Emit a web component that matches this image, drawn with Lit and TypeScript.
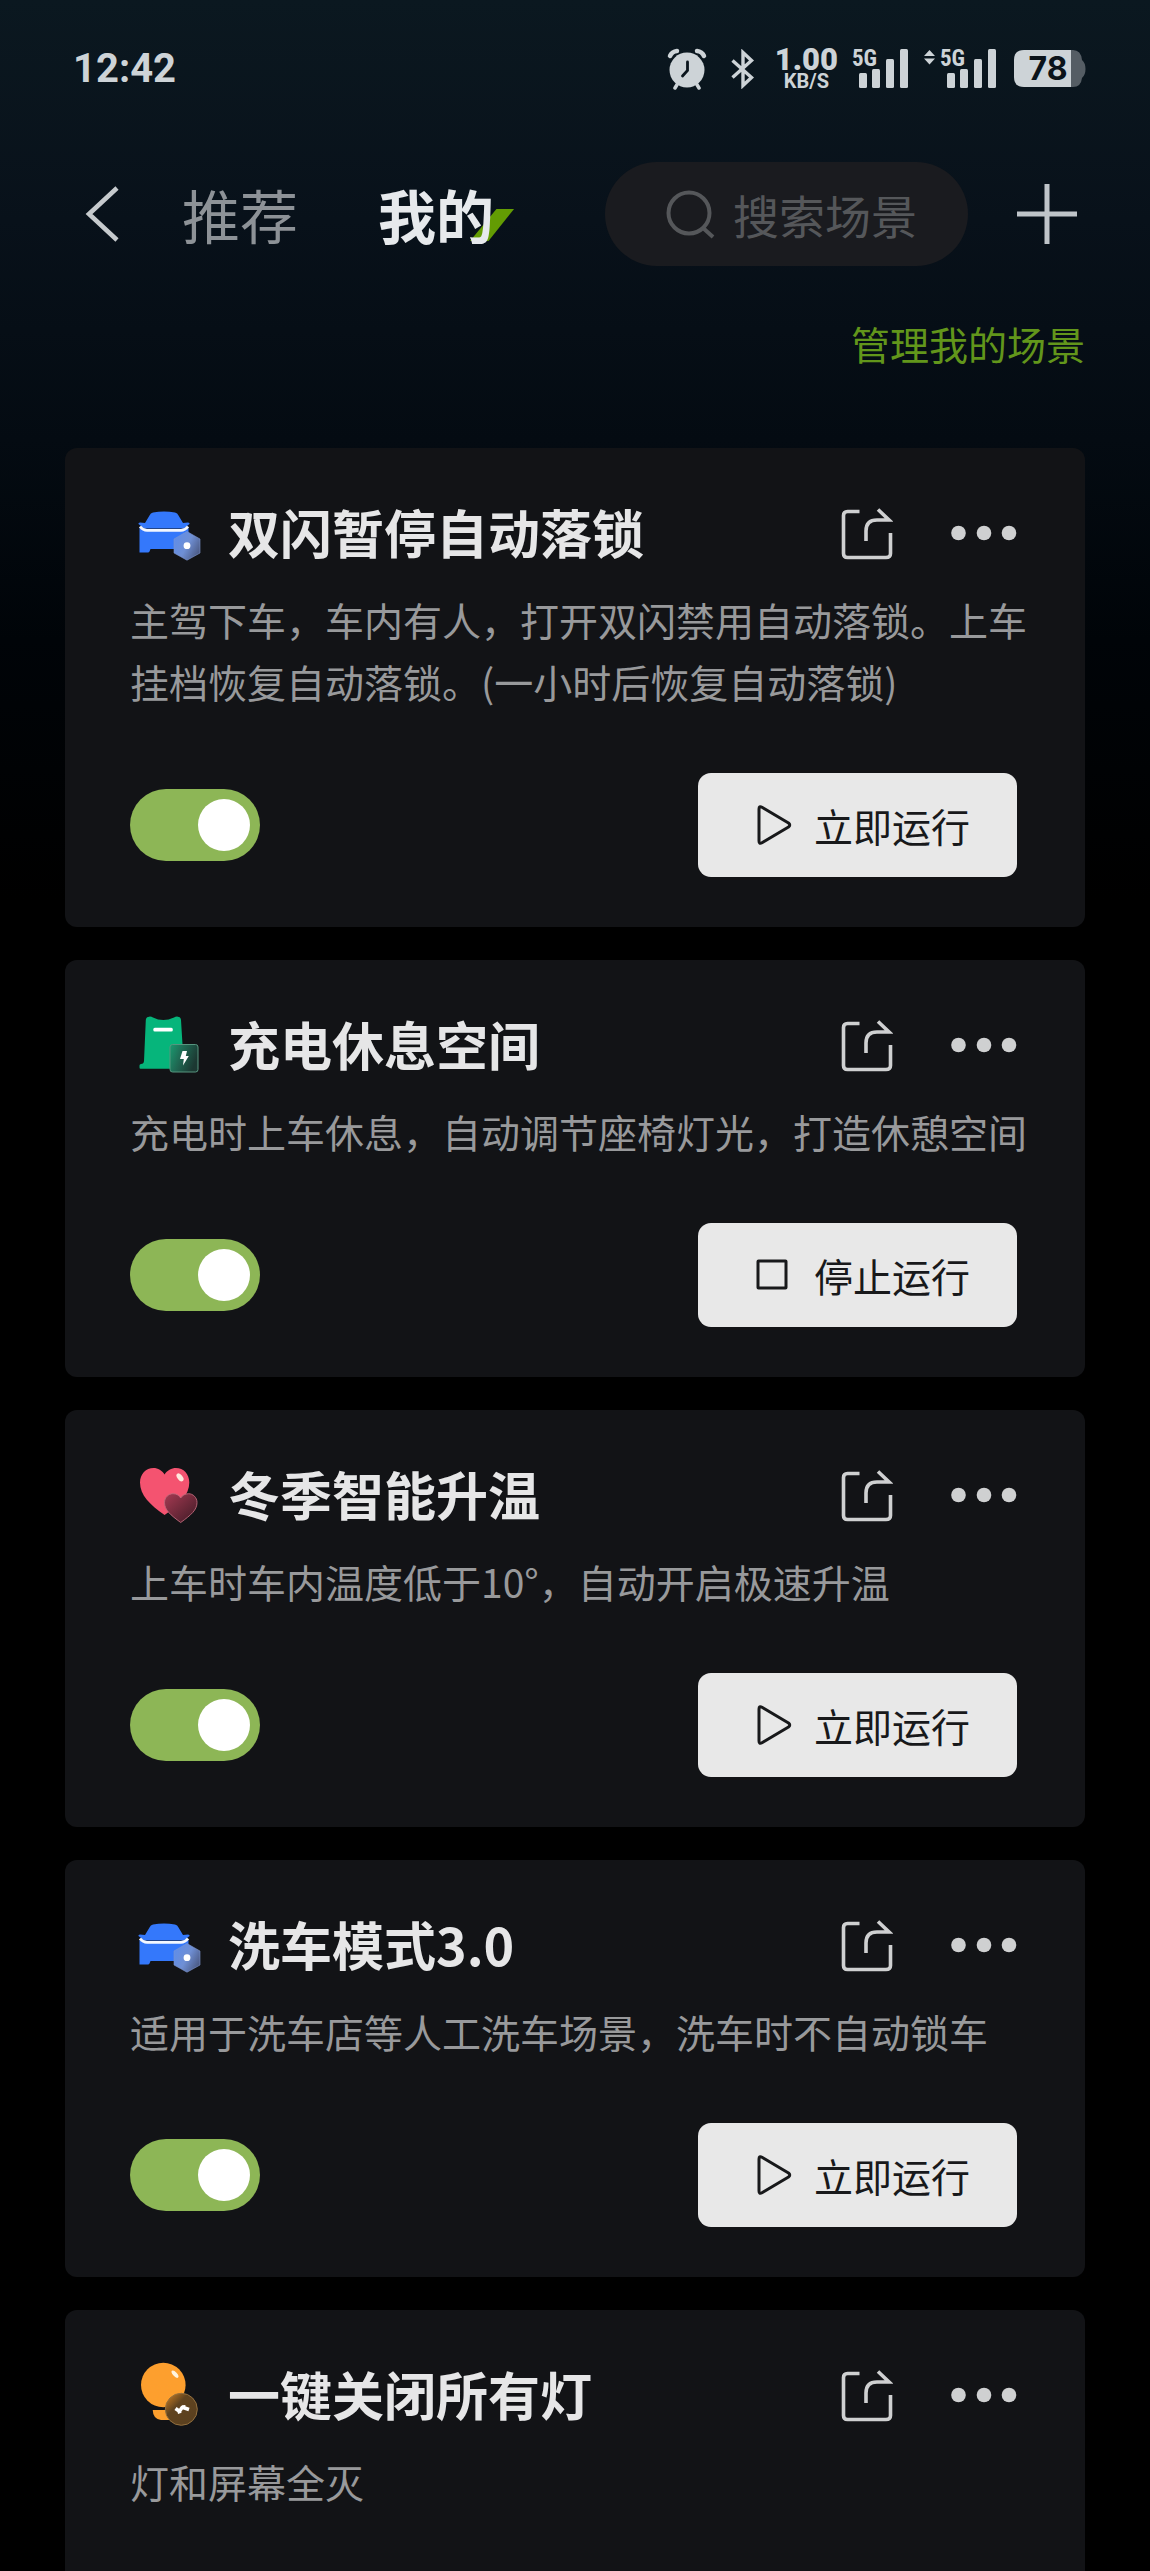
import { LitElement, html, css, svg, nothing, type TemplateResult } from "lit";
import { customElement, property, state } from "lit/decorators.js";

type IconName = "car" | "charge" | "heart" | "bulb";

interface Scene {
  id: string;
  icon: IconName;
  title: string;
  desc: string;
  enabled?: boolean;
  running?: boolean;
}

const SCENES: Scene[] = [
  {
    id: "lock",
    icon: "car",
    title: "双闪暂停自动落锁",
    desc: "主驾下车，车内有人，打开双闪禁用自动落锁。上车挂档恢复自动落锁。(一小时后恢复自动落锁)",
    enabled: true,
    running: false,
  },
  {
    id: "charge",
    icon: "charge",
    title: "充电休息空间",
    desc: "充电时上车休息，自动调节座椅灯光，打造休憩空间",
    enabled: true,
    running: true,
  },
  {
    id: "winter",
    icon: "heart",
    title: "冬季智能升温",
    desc: "上车时车内温度低于10°，自动开启极速升温",
    enabled: true,
    running: false,
  },
  {
    id: "wash",
    icon: "car",
    title: "洗车模式3.0",
    desc: "适用于洗车店等人工洗车场景，洗车时不自动锁车",
    enabled: true,
    running: false,
  },
  { id: "lights", icon: "bulb", title: "一键关闭所有灯", desc: "灯和屏幕全灭" },
];

const ICONS: Record<IconName, TemplateResult> = {
  car: svg`
    <defs>
      <linearGradient id="hex" x1="0" y1="0.2" x2="1" y2="0.8">
        <stop offset="0" stop-color="#5f8dea" />
        <stop offset="0.5" stop-color="#6f8fd4" />
        <stop offset="1" stop-color="#48557c" />
      </linearGradient>
    </defs>
    <path fill="#3478fb" d="M17 10.5Q28 8.5 39 10.5Q41.500 11 42.500 13.500L47 21L52 20.500Q54 20.500 53.500 22L48 26.500H8L2.500 22Q2 20.500 4 20.500L9 21L13.500 13.500Q14.500 11 17 10.500Z" />
    <path fill="#3478fb" d="M3.500 26L9 29H47L52.500 26V50H44L42 47H14.500L13.500 49.500Q13 50.500 12 50.500H3.500Z" />
    <path fill="none" stroke="#f3f7ff" stroke-width="2.8" d="M4 24.500Q7 28.400 11 28.400H45Q49 28.400 52 24.500" />
    <path fill="url(#hex)" stroke="#7e96cf" stroke-width="0.600" d="M51 29.500L64 37V51L51 58.200L38 51V37Z" />
    <circle cx="51" cy="43.700" r="3.400" fill="#fff" />
  `,
  charge: svg`
    <defs>
      <linearGradient id="badge" x1="0" y1="0" x2="1" y2="0.4">
        <stop offset="0" stop-color="#1a9a70" />
        <stop offset="0.45" stop-color="#1f6b54" />
        <stop offset="1" stop-color="#1c3832" />
      </linearGradient>
    </defs>
    <path fill="#06b57b" d="M13 2.700Q15 2.300 17 3.500Q22 6 27.300 6Q32.500 6 38 3.500Q40 2.300 42 2.700Q44.800 3 45 6L48 54.700H4.500Q3.500 54.700 3.500 53.500V51.500Q3.500 50 5 50Q7.800 50 8 47L9.800 6Q10 3 13 2.700Z" />
    <rect x="17.300" y="13.800" width="19.500" height="3.800" rx="1.500" fill="#fff" />
    <rect x="34" y="30.500" width="28" height="27.500" rx="2.500" fill="url(#badge)" stroke="#57957f" stroke-width="1" />
    <path fill="#fff" d="M46.500 37H51L49.800 42H52.800L47 51.500L47.800 45H44Z" />
  `,
  heart: svg`
    <defs>
      <linearGradient id="mini" x1="0" y1="0" x2="1" y2="1">
        <stop offset="0" stop-color="#a63a52" />
        <stop offset="1" stop-color="#3d1a25" />
      </linearGradient>
    </defs>
    <path fill="#f45370" d="M28.600 51C14 41 4 31 4 18.500C4 10 10 4 17.500 4C22 4 26 6.500 28.600 10.500C31 6.500 35.500 4 40 4C47.500 4 53.300 10 53.300 18.500C53.300 31 43 41 28.600 51Z" />
    <ellipse cx="44" cy="13.300" rx="2.600" ry="4.600" transform="rotate(-38 44 13.300)" fill="#ffe9dd" />
    <path fill="url(#mini)" stroke="#c06a7c" stroke-width="0.900" d="M44.700 58.500C34.500 51 28.500 46 28.500 38.500C28.500 33.500 32.500 29.700 37 29.700C40.500 29.700 43.300 31.500 44.700 34C46.200 31.500 49 29.700 52.500 29.700C57 29.700 61 33.500 61 38.500C61 46 55 51 44.700 58.500Z" />
  `,
  bulb: svg`
    <defs>
      <linearGradient id="flash" x1="0" y1="0.1" x2="0.8" y2="0.9">
        <stop offset="0" stop-color="#c77b22" />
        <stop offset="0.4" stop-color="#60431f" />
        <stop offset="1" stop-color="#5a401f" />
      </linearGradient>
    </defs>
    <circle cx="27.300" cy="21" r="22.300" fill="#fd9f2e" />
    <path fill="#fd9f2e" d="M16.700 46H36V56H25Q17 55 16.700 46Z" />
    <ellipse cx="39" cy="10.200" rx="2" ry="4.600" transform="rotate(-42 39 10.200)" fill="#fff4e0" />
    <circle cx="45.300" cy="45.300" r="16" fill="url(#flash)" stroke="#93703f" stroke-width="1" />
    <path fill="none" stroke="#fff" stroke-width="3.600" stroke-linejoin="round" d="M39.500 44.500L43.500 47.300L46.300 43.300L53 45.500M46 43L49.500 42.800M41.500 48.200L45 47" />
  `,
};

@customElement("scene-card")
export class SceneCard extends LitElement {
  @property({ attribute: false }) scene!: Scene;
  @state() private running = false;

  static styles = css`
    :host {
      display: block;
      flex: none;
      min-height: 417px;
      box-sizing: border-box;
      padding: 50px 58px 50px 65px;
      border-radius: 12px;
      background: #121316;
    }
    .head {
      display: flex;
      align-items: center;
      height: 72px;
      padding-left: 6px;
      margin-bottom: 18px;
    }
    .icon {
      width: 68px;
      height: 64px;
      flex: none;
      overflow: visible;
    }
    h2 {
      flex: 1;
      margin: 0 0 0 24px;
      font-size: 52px;
      line-height: 66px;
      font-weight: 700;
      color: #e6e6e7;
      padding-bottom: 4px;
    }
    button {
      font: inherit;
      border: 0;
      padding: 0;
      background: none;
      color: inherit;
      cursor: pointer;
      display: flex;
      align-items: center;
    }
    .share svg {
      width: 52px;
      height: 52px;
    }
    .more {
      margin: 0 10px 0 58px;
    }
    .more svg {
      width: 66px;
      height: 52px;
    }
    p {
      margin: 0;
      font-size: 39px;
      line-height: 62px;
      color: #98999b;
    }
    .actions {
      display: flex;
      justify-content: space-between;
      align-items: center;
      margin: 61px 10px 0 0;
    }
    .toggle {
      display: flex;
    }
    .toggle input {
      appearance: none;
      display: flex;
      align-items: center;
      width: 130px;
      height: 72px;
      margin: 0;
      padding: 0 10px;
      border-radius: 36px;
      background: #45474b;
      cursor: pointer;
    }
    .toggle input:checked {
      justify-content: flex-end;
      background: #8db656;
    }
    .toggle input::before {
      content: "";
      width: 52px;
      height: 52px;
      border-radius: 50%;
      background: #fff;
    }
    .run {
      min-width: 319px;
      height: 104px;
      padding: 0 46px 0 56px;
      box-sizing: border-box;
      border-radius: 13px;
      background: #e8e8e8;
      color: #18191b;
      font-size: 39px;
      gap: 20px;
      white-space: nowrap;
    }
    .run svg {
      width: 40px;
      height: 44px;
      flex: none;
    }
  `;

  willUpdate(changed: Map<string, unknown>) {
    if (changed.has("scene")) this.running = !!this.scene.running;
  }

  private renderActions() {
    const { enabled, title, id } = this.scene;
    if (enabled === undefined) return nothing;
    return html`
      <div class="actions">
        <label class="toggle" for="toggle-${id}">
          <input id="toggle-${id}" type="checkbox" role="switch" aria-label=${title} .checked=${enabled} />
        </label>
        <button class="run" @click=${() => (this.running = !this.running)}>
          <svg viewBox="0 0 40 44" fill="none" stroke="#18191b" stroke-width="3" stroke-linejoin="round" aria-hidden="true">
            ${this.running
              ? svg`<rect x="4" y="8" width="28" height="27" rx="0.500" />`
              : svg`<path d="M5 6Q5 2.500 8 4.200L34.500 20Q37 22 34.500 24L8 39.800Q5 41.500 5 38Z" />`}
          </svg>
          <span>${this.running ? "停止运行" : "立即运行"}</span>
        </button>
      </div>
    `;
  }

  render() {
    const { icon, title, desc } = this.scene;
    return html`
      <div class="head">
        <svg class="icon" viewBox="0 0 68 64" aria-hidden="true">${ICONS[icon]}</svg>
        <h2>${title}</h2>
        <button class="share" aria-label="分享">
          <svg viewBox="0 0 52 52" fill="none" stroke="#cfd0d1" stroke-width="3.600" stroke-linecap="butt">
            <path d="M18.500 3.500H6.500Q2.500 3.500 2.500 7.500V45.500Q2.500 49.500 6.500 49.500H45Q49.500 49.500 49.500 45.500V25" />
            <path d="M25 33V23Q25 12 36 12H48L37 1.500" />
          </svg>
        </button>
        <button class="more" aria-label="更多">
          <svg viewBox="0 0 66 52" fill="#cfd0d1">
            <circle cx="7.500" cy="25" r="7.300" />
            <circle cx="33" cy="25" r="7.300" />
            <circle cx="58" cy="25" r="7.300" />
          </svg>
        </button>
      </div>
      <p>${desc}</p>
      ${this.renderActions()}
    `;
  }
}

@customElement("status-bar")
export class StatusBar extends LitElement {
  static styles = css`
    :host {
      display: flex;
      align-items: center;
      height: 42px;
      padding: 48px 64px 0 73px;
      color: #cdd3d7;
      font-family: Roboto, "Noto Sans", sans-serif;
      font-weight: 700;
    }
    time {
      margin-right: auto;
      font-size: 40px;
      line-height: 42px;
    }
    svg {
      display: block;
      flex: none;
    }
    .alarm {
      width: 40px;
      height: 42px;
    }
    .bluetooth {
      width: 24px;
      height: 40px;
      margin-left: 24px;
    }
    .rate {
      margin: 0 14px 0 20px;
      text-align: center;
    }
    .rate b,
    .rate small {
      display: block;
    }
    .rate b {
      font-size: 31px;
      line-height: 24px;
    }
    .rate small {
      font-size: 20px;
      line-height: 18px;
      font-weight: 700;
    }
    .signal {
      width: 56px;
      height: 40px;
      overflow: visible;
    }
    .signal.data {
      width: 72px;
      margin: 0 18px 0 16px;
    }
    .signal text {
      font-family: "Liberation Sans Narrow", "Roboto Condensed", "Liberation Sans", sans-serif;
      font-size: 23px;
      font-weight: 700;
    }
    .battery {
      width: 72px;
      height: 38px;
      overflow: visible;
    }
    .battery text {
      font-family: Inter, sans-serif;
      font-size: 32px;
      font-weight: 700;
    }
  `;

  private bars(x: number) {
    return svg`
      <rect x=${x} y="24" width="8" height="15" rx="1.500" />
      <rect x=${x + 13} y="20" width="8" height="19" rx="1.500" />
      <rect x=${x + 27} y="10" width="8" height="29" rx="1.500" />
      <rect x=${x + 41} y="0" width="8" height="39" rx="1.500" />
    `;
  }

  render() {
    return html`
      <time>12:42</time>
      <svg class="alarm" viewBox="0 0 40 42" aria-label="闹钟">
        <g fill="none" stroke="#cdd3d7" stroke-linecap="round">
          <path stroke-width="4.500" d="M3 8Q5 3.500 10 3M37 8Q35 3.500 30 3" />
          <path stroke-width="3.500" d="M11 35L8 40M29 35L32 40" />
        </g>
        <circle cx="20" cy="22" r="17.500" fill="#cdd3d7" />
        <path fill="none" stroke="#0b151d" stroke-width="2.800" stroke-linecap="round" d="M20.500 14V22.500L15.500 28" />
      </svg>
      <svg class="bluetooth" viewBox="0 0 24 40" fill="none" stroke="#cdd3d7" stroke-width="3.400" aria-label="蓝牙">
        <path d="M1.500 11.500L20.500 28.500L12 36.500V3.500L20.500 11.500L1.500 28.500" />
      </svg>
      <div class="rate"><b>1.00</b><small>KB/S</small></div>
      <svg class="signal" viewBox="0 0 56 40" fill="#cdd3d7">
        <text x="0" y="17">5G</text>
        ${this.bars(7)}
      </svg>
      <svg class="signal data" viewBox="0 0 72 40" fill="#cdd3d7">
        <path d="M5.500 1L11 7H0ZM5.500 15.500L0 9.500H11Z" />
        <text x="16" y="17">5G</text>
        ${this.bars(23)}
      </svg>
      <svg class="battery" viewBox="0 0 72 38">
        <path fill="#555d64" d="M50 0H59Q67 0 68 10Q71.500 13 71.500 19Q71.500 25 68 28Q67 37 59 37H50Z" />
        <path fill="#cdd3d7" d="M10 0H57V37H10Q0 37 0 27V10Q0 0 10 0Z" />
        <text x="34" y="30" text-anchor="middle" fill="#0b131a">78</text>
      </svg>
    `;
  }
}

@customElement("app-root")
export class AppRoot extends LitElement {
  static styles = css`
    :host {
      display: flex;
      flex-direction: column;
      height: 100vh;
      overflow: hidden;
      background: #000 linear-gradient(#0b1820, #08111a 220px, #040b12 440px, #000408 640px, #000 900px) no-repeat;
      font-family: "Noto Sans CJK SC", sans-serif;
    }
    header {
      display: flex;
      align-items: center;
      height: 104px;
      flex: none;
      margin-top: 72px;
      padding: 0 72px 0 84px;
    }
    button {
      font: inherit;
      border: 0;
      padding: 0;
      background: none;
      color: inherit;
      cursor: pointer;
    }
    svg {
      display: block;
      flex: none;
    }
    .back svg {
      width: 36px;
      height: 56px;
    }
    nav {
      display: flex;
      gap: 80px;
      margin-left: 62px;
      font-size: 58px;
      line-height: 104px;
    }
    nav a {
      color: #8d9297;
      text-decoration: none;
      position: relative;
    }
    nav a.active {
      color: #e6e9ec;
      font-weight: 700;
      z-index: 0;
    }
    .slash {
      position: absolute;
      z-index: -1;
      right: -20px;
      bottom: 25px;
      width: 44px;
      height: 32px;
      background: #639c03;
      clip-path: polygon(60% 0, 100% 0, 42% 100%, 0 100%);
    }
    .search {
      display: flex;
      align-items: center;
      gap: 18px;
      box-sizing: border-box;
      width: 363px;
      height: 104px;
      margin-left: auto;
      padding: 0 24px 0 60px;
      border-radius: 52px;
      background: #1a1b1f;
    }
    .search svg {
      width: 50px;
      height: 50px;
    }
    .search input {
      flex: 1;
      min-width: 0;
      padding: 0;
      border: 0;
      outline: 0;
      appearance: none;
      background: none;
      font: inherit;
      font-size: 46px;
      color: #e6e9ec;
    }
    .search input::placeholder {
      color: #55575a;
      opacity: 1;
    }
    .add {
      margin-left: 48px;
    }
    .add svg {
      width: 62px;
      height: 62px;
    }
    .manage {
      align-self: flex-end;
      margin: 46px 65px 74px 0;
      font-size: 39px;
      line-height: 62px;
      color: #62961b;
      text-decoration: none;
    }
    main {
      display: flex;
      flex-direction: column;
      gap: 33px;
      flex: 1;
      min-height: 0;
      overflow: hidden;
      padding: 0 65px;
    }
  `;

  render() {
    return html`
      <status-bar></status-bar>
      <header>
        <button class="back" aria-label="返回">
          <svg viewBox="0 0 36 56" fill="none" stroke="#c6cacd" stroke-width="4.600">
            <path d="M33 2L5 28L33 54" />
          </svg>
        </button>
        <nav>
          <a href="#recommend">推荐</a>
          <a href="#mine" class="active" aria-current="page">我的<span class="slash"></span></a>
        </nav>
        <label class="search">
          <svg viewBox="0 0 50 50" fill="none" stroke="#55575a" stroke-width="4" aria-hidden="true">
            <circle cx="24" cy="24" r="20.500" />
            <path d="M37.500 38.500L48 48" />
          </svg>
          <input type="search" placeholder="搜索场景" aria-label="搜索场景" />
        </label>
        <button class="add" aria-label="新建场景">
          <svg viewBox="0 0 62 62" stroke="#bfc4c9" stroke-width="5">
            <path d="M31 1V61M1 31H61" />
          </svg>
        </button>
      </header>
      <a class="manage" href="#manage">管理我的场景</a>
      <main>${SCENES.map((s) => html`<scene-card .scene=${s}></scene-card>`)}</main>
    `;
  }
}
